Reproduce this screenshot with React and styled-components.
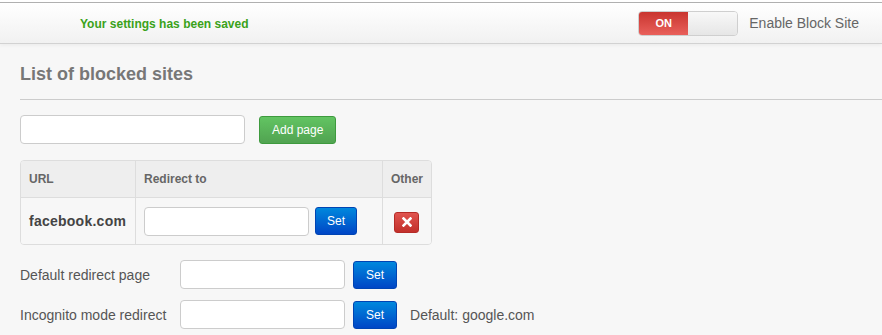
import React from 'react'
import styled, { createGlobalStyle } from 'styled-components'

const GlobalStyle = createGlobalStyle`
  html, body {
    margin: 0;
    padding: 0;
    background: #f7f7f7;
    font-family: "Liberation Sans", Arial, sans-serif;
  }
`

const Page = styled.div`
  border-top: 2px solid #ffffff;
  min-height: 335px;
  box-sizing: border-box;
`

const Header = styled.header`
  height: 40px;
  border-top: 1px solid #b0b0b0;
  border-bottom: 1px solid #d2d2d2;
  background: linear-gradient(#ffffff, #f1f1f1);
  box-shadow: 0 2px 3px rgba(0, 0, 0, 0.04);
  display: flex;
  align-items: center;
  padding: 0 23px 0 80px;
`

const Saved = styled.span`
  color: #3aa21a;
  font-size: 12px;
  font-weight: bold;
  flex: 1;
  margin-top: 1px;
`

const Toggle = styled.div`
  display: flex;
  width: 100px;
  height: 25px;
  border: 1px solid #cfcfcf;
  border-radius: 4px;
  overflow: hidden;
  box-sizing: border-box;
  margin-right: 11px;
`

const ToggleOn = styled.div`
  width: 49px;
  background: linear-gradient(#c9352f, #e9605b);
  color: #fff;
  font-size: 11px;
  font-weight: bold;
  display: flex;
  align-items: center;
  justify-content: center;
`

const ToggleOff = styled.div`
  flex: 1;
  background: linear-gradient(#f8f8f8, #e6e6e6);
`

const ToggleLabel = styled.span`
  color: #666;
  font-size: 14px;
`

const Content = styled.main`
  padding: 0 0 0 20px;
`

const Title = styled.h2`
  margin: 0;
  padding: 20px 0 14px;
  font-size: 18px;
  color: #777;
  font-weight: bold;
  border-bottom: 1px solid #cccccc;
`

const Row = styled.div`
  display: flex;
  align-items: center;
  gap: ${({ gap }) => gap || 7}px;
  margin-top: ${({ top }) => top || 0}px;
`

const Input = styled.input`
  width: ${({ w }) => w}px;
  height: 29px;
  box-sizing: border-box;
  border: 1px solid #cccccc;
  border-radius: 4px;
  background: #fff;
  outline: none;
`

const Button = styled.button`
  height: ${({ h }) => h || 28}px;
  padding: 0 ${({ px }) => px || 12}px;
  border-radius: 3px;
  font-family: inherit;
  font-size: 12px;
  color: #fff;
  cursor: pointer;
  border: 1px solid ${({ green }) => (green ? '#3e9a3e' : '#0044b3')};
  background: ${({ green }) =>
    green ? 'linear-gradient(#62c462, #51a351)' : 'linear-gradient(#0088dd, #0046c6)'};
`

const Table = styled.table`
  margin-top: 16px;
  width: 412px;
  border-collapse: separate;
  border-spacing: 0;
  border: 1px solid #dddddd;
  border-radius: 4px;
  overflow: hidden;
`

const Th = styled.th`
  background: #eeeeee;
  height: 36px;
  padding: 0 8px;
  text-align: left;
  font-size: 12px;
  color: #666;
  border-left: ${({ first }) => (first ? 'none' : '1px solid #dddddd')};
  border-bottom: 1px solid #dddddd;
`

const Td = styled.td`
  height: 46px;
  padding: 0 8px;
  background: #f7f7f7;
  border-left: ${({ first }) => (first ? 'none' : '1px solid #dddddd')};
  text-align: ${({ center }) => (center ? 'center' : 'left')};
`

const Site = styled.span`
  font-size: 14px;
  font-weight: bold;
  color: #444;
  letter-spacing: 0.25px;
`

const Delete = styled.button`
  width: 25px;
  height: 21px;
  padding: 0;
  border-radius: 3px;
  border: 1px solid #b52b27;
  background: linear-gradient(#e0544f, #c2302b);
  display: inline-flex;
  align-items: center;
  justify-content: center;
  margin-top: 2px;
`

const Label = styled.span`
  width: 152px;
  font-size: 14px;
  color: #555;
`

const Note = styled.span`
  font-size: 14px;
  color: #555;
  margin-left: 5px;
`

const App = () => {
  return (
    <Page>
      <GlobalStyle />
      <Header>
        <Saved>Your settings has been saved</Saved>
        <Toggle>
          <ToggleOn>ON</ToggleOn>
          <ToggleOff />
        </Toggle>
        <ToggleLabel>Enable Block Site</ToggleLabel>
      </Header>
      <Content>
        <Title>List of blocked sites</Title>
        <Row gap={14} top={15}>
          <Input w={225} />
          <Button green h={28}>Add page</Button>
        </Row>
        <Table>
          <thead>
            <tr>
              <Th first style={{ width: 98 }}>URL</Th>
              <Th style={{ width: 230 }}>Redirect to</Th>
              <Th>Other</Th>
            </tr>
          </thead>
          <tbody>
            <tr>
              <Td first>
                <Site>facebook.com</Site>
              </Td>
              <Td>
                <Row gap={6}>
                  <Input w={165} />
                  <Button px={11}>Set</Button>
                </Row>
              </Td>
              <Td center>
                <Delete>
                  <svg width="10" height="10" viewBox="0 0 10 10">
                    <path d="M1.5 1.5 L8.5 8.5 M8.5 1.5 L1.5 8.5" stroke="#fff" strokeWidth="2.6" strokeLinecap="square" />
                  </svg>
                </Delete>
              </Td>
            </tr>
          </tbody>
        </Table>
        <Row top={15} gap={8}>
          <Label>Default redirect page</Label>
          <Input w={165} />
          <Button px={12} h={28}>Set</Button>
        </Row>
        <Row top={11} gap={8}>
          <Label>Incognito mode redirect</Label>
          <Input w={165} />
          <Button px={12} h={28}>Set</Button>
          <Note>Default: google.com</Note>
        </Row>
      </Content>
    </Page>
  )
}

export default App
